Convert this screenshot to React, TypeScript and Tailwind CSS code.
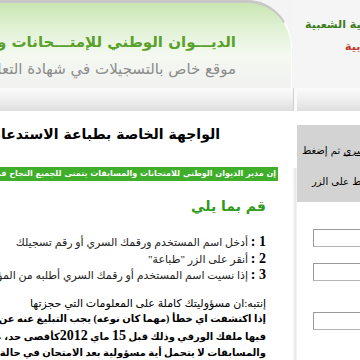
import React from "react";

const serif = { fontFamily: '"Liberation Serif", "DejaVu Sans", serif' };
const sans = { fontFamily: '"DejaVu Sans", "Liberation Sans", sans-serif' };

export default function App() {
  return (
    <div className="w-[360px] h-[360px] overflow-hidden bg-white" style={sans}>
      <div className="w-[540px]">
        {/* Header */}
        <div className="flex h-[88px] bg-[#f4f4f4]">
          <div
            dir="rtl"
            className="w-[292px] shrink-0 overflow-hidden rounded-tr-[44px_48px] border-t-[3px] border-[#c8c8c8] border-r border-r-white bg-[linear-gradient(180deg,#c9e6b2_0%,#e0f1d4_30%,#f4f9f0_60%,#f1f1f1_100%)] pr-[55px]"
          >
            <div className="whitespace-nowrap pt-[26px] text-[15px] font-bold leading-[26px] text-[#5aa12b]">
              الديـــوان الوطني للإمتـــحانات والمسابقات
            </div>
            <div className="whitespace-nowrap pt-[2px] text-[15px] leading-[24px] text-[#8c8c8c]">
              موقع خاص بالتسجيلات في شهادة التعليم المتوسط
            </div>
          </div>
          <div className="flex-1 overflow-hidden bg-[#f5f5f5] pt-[14px]">
            <div className="pl-[13px] whitespace-nowrap leading-[18px]">
              <span dir="rtl" className="inline-block text-[11px] font-bold text-[#3d7d22]">
                الجمهورية الجزائرية الديمقراطية الشعبية
              </span>
            </div>
            <div className="pl-[53px] pt-[2px] whitespace-nowrap leading-[18px]">
              <span dir="rtl" className="inline-block text-[11px] font-bold text-[#c0392b]">
                وزارة التربية
              </span>
            </div>
          </div>
        </div>

        {/* Nav bar */}
        <div className="flex h-[23px] bg-[linear-gradient(180deg,#fbfbfb_0%,#efefef_50%,#dedede_100%)]">
          <div className="w-[293px] shrink-0" />
          <div className="w-[1px] bg-[#d0d0d0]" />
          <div className="w-[3px] bg-[#fafafa]" />
          <div className="flex-1" />
        </div>

        {/* Main */}
        <div className="flex h-[260px]">
          {/* Left column */}
          <div dir="rtl" className="w-[292px] shrink-0 overflow-hidden" style={serif}>
            <div
              className="mt-[13px] whitespace-nowrap pr-[72px] text-[14px] font-bold leading-[20px] text-black"
              style={sans}
            >
              الواجهة الخاصة بطباعة الاستدعاءات للمترشحين
            </div>
            <div className="mt-[23px] mr-[14px] h-[14px] overflow-hidden whitespace-nowrap bg-[#3fae2a] pr-[2px] text-[8px] font-bold leading-[14px] text-white" style={sans}>
              إن مدير الديوان الوطني للامتحانات والمسابقات يتمنى للجميع النجاح في امتحان شهادة التعليم المتوسط
            </div>
            <div className="mt-[15px] pr-[26px] text-[14px] font-bold leading-[20px] text-[#2f9a1c]" style={sans}>
              قم بما يلي
            </div>
            <div className="mt-[18px] pr-[26px] text-[11px] leading-[16.5px] text-[#222]">
              <div className="whitespace-nowrap">
                <b className="text-[14px] text-black">1 :</b> أدخل اسم المستخدم ورقمك السري أو رقم تسجيلك
              </div>
              <div className="whitespace-nowrap">
                <b className="text-[14px] text-black">2 :</b> أنقر على الزر "طباعة"
              </div>
              <div className="whitespace-nowrap">
                <b className="text-[14px] text-black">3 :</b> إذا نسيت اسم المستخدم أو رقمك السري أطلبه من المؤسسة التي أودعت فيها ملفك
              </div>
            </div>
            <div className="mt-[11px] pr-[26px] text-[10px] leading-[16.5px] text-black">
              <div className="whitespace-nowrap text-[11px]">إنتبه:ان مسؤوليتك كاملة على المعلومات التي حجزتها</div>
              <div className="whitespace-nowrap font-bold">
                إذا اكتشفت اي خطأ (مهما كان نوعه) يجب التبليغ عنه عن طريق المؤسسة التي أودعت
              </div>
              <div className="whitespace-nowrap font-bold">
                فيها ملفك الورقي وذلك قبل <span className="text-[14px]">15</span> ماي <span className="text-[14px]">2012</span>كأقصى حد، علما أن الديوان الوطني للامتحانات
              </div>
              <div className="whitespace-nowrap font-bold">
                والمسابقات لا يتحمل أية مسؤولية بعد الامتحان في حالة عدم التبليغ
              </div>
            </div>
          </div>

          {/* Shadow divider */}
          <div className="w-[5px] shrink-0 pt-[57px]">
            <div className="h-full bg-[linear-gradient(90deg,#ffffff_0%,#ececec_60%,#e2e2e2_80%,#ffffff_100%)]" />
          </div>

          {/* Right column */}
          <div className="flex-1 overflow-hidden">
            <div className="mt-[14px] h-[77px] bg-[#d3d3d3] pt-[18px] text-[10px] leading-[16px] text-black">
              <div className="pl-[5px] whitespace-nowrap">
                <span dir="rtl" className="inline-block">
                  أدخل <span className="underline">اسم المستخدم والرقم السري</span> ثم إضغط
                </span>
              </div>
              <div className="mt-[15px] pl-[15px] whitespace-nowrap">
                <span dir="rtl" className="inline-block">وفي الأخير اضغط على الزر</span>
              </div>
            </div>
            <div className="ml-[16px] mt-[27px] h-[18px] w-[160px] border border-[#b5b5b5] border-t-[#9a9a9a] border-l-[#9a9a9a] bg-white" />
            <div className="ml-[16px] mt-[16px] h-[18px] w-[160px] border border-[#b5b5b5] border-t-[#9a9a9a] border-l-[#9a9a9a] bg-white" />
            <div className="ml-[16px] mt-[31px] h-[18px] w-[160px] border border-[#b5b5b5] border-t-[#9a9a9a] border-l-[#9a9a9a] bg-white" />
          </div>
        </div>
      </div>
    </div>
  );
}
